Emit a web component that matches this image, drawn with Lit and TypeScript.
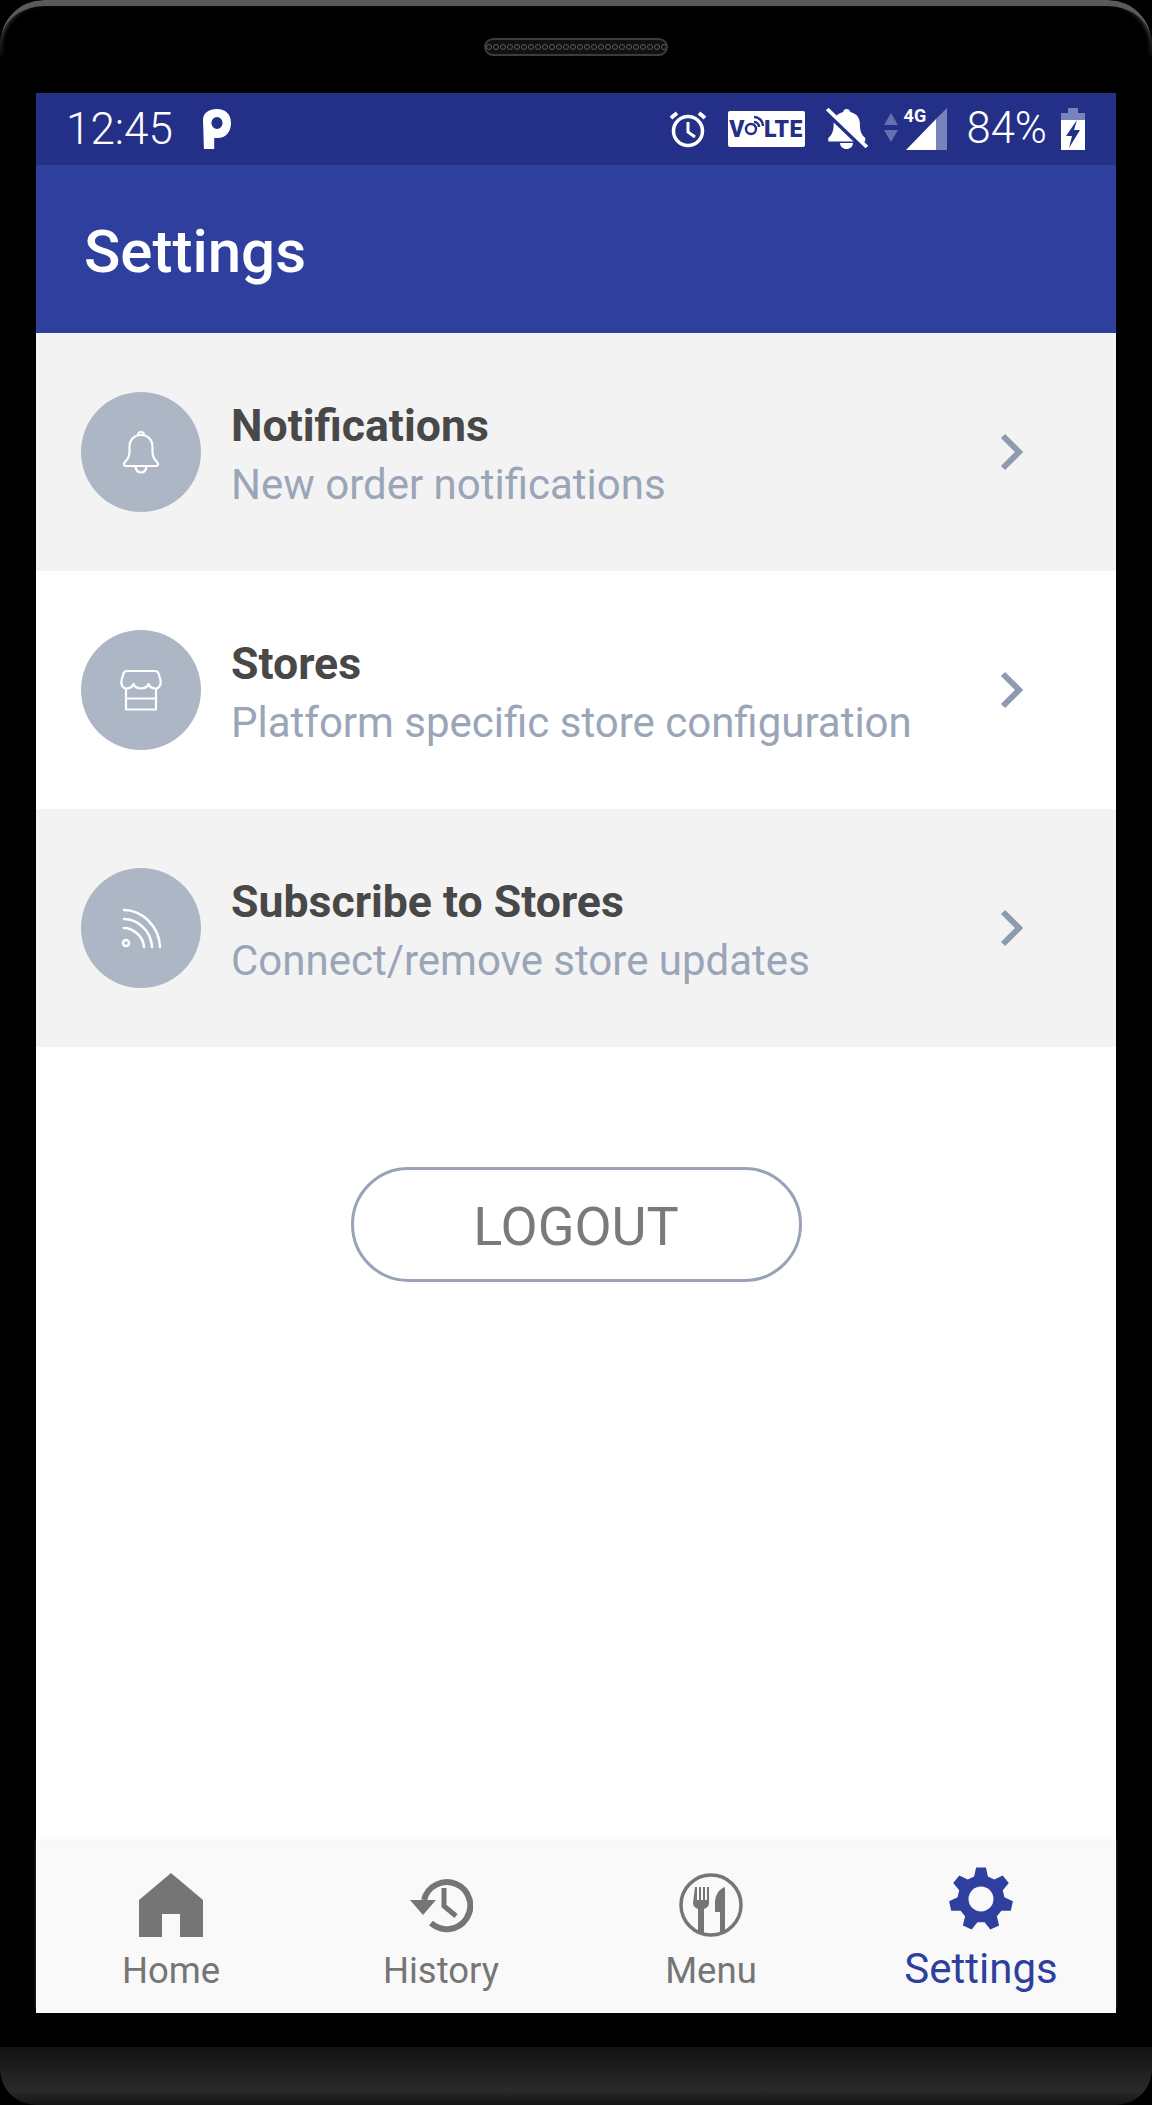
import { LitElement, html, css, svg } from "lit";
import { customElement } from "lit/decorators.js";

// seven toothed gear, same shape as the reference tab icon
const gearPoints = () => {
  const pts: string[] = [];
  const teeth = 7;
  for (let i = 0; i < teeth; i++) {
    const a = (i * 2 * Math.PI) / teeth - Math.PI / 2;
    const step = (2 * Math.PI) / teeth;
    const add = (r: number, off: number) =>
      pts.push(`${(32 + r * Math.cos(a + off * step)).toFixed(1)},${(32 + r * Math.sin(a + off * step)).toFixed(1)}`);
    add(32, -0.17);
    add(32, 0.17);
    add(23.5, 0.33);
    add(23.5, 0.67);
  }
  return pts.join(" ");
};

const icons = {
  bell: svg`<g fill="none" stroke="#fff" stroke-width="2.200"><path d="M21 7a3 3 0 1 1 6 0"/><path d="M24 7c-7 0-11.500 5-11.500 12v5c0 6-2.500 8-5 10.500-1.200 1.500-.5 3.500 1.500 3.500h30c2 0 2.700-2 1.500-3.500-2.500-2.500-5-4.500-5-10.500v-5c0-7-4.500-12-11.500-12Z"/><path d="M18.500 38.500c.5 4 2.500 6 5.500 6s5-2 5.500-6"/></g>`,
  store: svg`<g fill="none" stroke="#fff" stroke-width="2.200" stroke-linejoin="round"><path d="M10 5H38C40 5 41 6 41.500 7.500L43.500 14C44.500 19 42 22.500 38.500 22.500C35.500 22.500 32.500 20.500 31.500 18C30.500 20.500 27.500 22.500 24 22.500C20.500 22.500 17.500 20.500 16.500 18C15.500 20.500 12.500 22.500 9.500 22.500C6 22.500 3.500 19 4.500 14L6.500 7.500C7 6 8 5 10 5Z"/><path d="M9 23v20.500h30V23M9 32.500h30"/></g>`,
  feed: svg`<g fill="none" stroke="#fff" stroke-width="2.500" stroke-linecap="round"><path d="M7 6c17 0 35 15 36 37"/><path d="M7 15c13 0 27 11 28 28"/><path d="M7 24c8 0 19 7 20 19"/><circle cx="9" cy="39" r="3"/></g>`,
};

const rows = [
  { icon: icons.bell, title: "Notifications", sub: "New order notifications", shade: true },
  { icon: icons.store, title: "Stores", sub: "Platform specific store configuration", shade: false },
  { icon: icons.feed, title: "Subscribe to Stores", sub: "Connect/remove store updates", shade: true },
];

@customElement("app-root")
export class AppRoot extends LitElement {
  static styles = css`
    :host {
      display: block;
      width: 1152px;
      height: 2105px;
      background: #000;
      font-family: Roboto, "Liberation Sans", sans-serif;
      overflow: hidden;
    }

    .top-bezel {
      height: 93px;
      box-sizing: border-box;
      padding-top: 38px;
      display: flex;
      justify-content: center;
      align-items: flex-start;
      position: relative;
      overflow: hidden;
    }

    .top-bezel::before {
      content: "";
      position: absolute;
      left: 0;
      right: 0;
      top: 0;
      height: 120px;
      box-sizing: border-box;
      border-top: 6px solid #5a5a5a;
      border-radius: 44px 44px 0 0;
      box-shadow: inset 5px 0 4px -3px #4a4a4a, inset -5px 0 4px -3px #4a4a4a;
      -webkit-mask-image: linear-gradient(#000 30px, transparent 60px);
    }

    .speaker {
      width: 184px;
      height: 18px;
      box-sizing: border-box;
      border: 2px solid #3c3c3c;
      border-radius: 9px;
      background: #111;
      display: flex;
      align-items: center;
      justify-content: center;
      gap: 1px;
      overflow: hidden;
    }

    .speaker i {
      width: 6px;
      height: 6px;
      flex: none;
      border-radius: 50%;
      border: 1px solid #5c5c5c;
      box-sizing: border-box;
    }

    .screen {
      margin: 0 36px;
      height: 1920px;
      background: #fff;
      display: flex;
      flex-direction: column;
    }

    .status {
      height: 72px;
      flex: none;
      background: #243088;
      color: #fff;
      display: flex;
      align-items: center;
      padding: 0 31px 0 30px;
    }

    .status svg {
      display: block;
      flex: none;
    }

    .time {
      font-size: 44px;
      font-weight: 300;
      line-height: 1;
      margin-right: 29px;
      width: 108px;
    }

    .spacer {
      flex: 1;
    }

    .pct {
      font-size: 43.5px;
      font-weight: 300;
      line-height: 1;
      margin: 0 14px 0 19px;
    }

    .volte {
      width: 77px;
      height: 36px;
      background: #fff;
      color: #243088;
      border-radius: 2px;
      margin: 0 19px 0 21px;
      font-size: 23px;
      font-weight: 900;
      display: flex;
      align-items: center;
      justify-content: center;
      letter-spacing: 0.5px;
    }

    .volte svg {
      margin: -8px -2px 0 -1px;
    }

    .arrows {
      margin-left: 14px;
    }

    .signal {
      position: relative;
      width: 42px;
      height: 42px;
      margin-left: 7px;
    }

    .signal span {
      position: absolute;
      left: -2px;
      top: 0;
      font-size: 18px;
      font-weight: 700;
      line-height: 15px;
    }

    .appbar {
      height: 168px;
      flex: none;
      background: #2f3f9e;
      color: #fff;
      font-size: 60px;
      font-weight: 500;
      display: flex;
      align-items: center;
      padding: 4px 0 0 48px;
      box-sizing: border-box;
    }

    .row {
      height: 238px;
      flex: none;
      display: flex;
      align-items: center;
      padding: 0 90px 0 45px;
      background: #fff;
    }

    .row.shade {
      background: #f3f3f3;
    }

    .row:first-of-type {
      box-shadow: inset 0 8px 6px -6px #e2e2e2;
    }

    .circle {
      width: 120px;
      height: 120px;
      flex: none;
      border-radius: 50%;
      background: #adb6c4;
      display: flex;
      align-items: center;
      justify-content: center;
      margin-right: 30px;
    }

    .text {
      flex: 1;
      min-width: 0;
      padding-top: 8px;
    }

    .title {
      font-size: 44.6px;
      font-weight: 700;
      line-height: 58px;
      color: #484848;
    }

    .sub {
      font-size: 42px;
      line-height: 60px;
      color: #9aa5b8;
    }

    .actions {
      flex: 1;
      display: flex;
      justify-content: center;
      align-items: flex-start;
      padding-top: 120px;
    }

    .logout {
      width: 451px;
      height: 115px;
      box-sizing: border-box;
      border: 3px solid #9aa2b8;
      border-radius: 58px;
      background: #fff;
      color: #7a7a7a;
      font-family: inherit;
      font-size: 54px;
      padding: 4px 0 0;
    }

    .tabs {
      height: 172px;
      flex: none;
      background: #f9f9f9;
      box-shadow: 0 -3px 4px -2px #f4f4f4;
      display: grid;
      grid-template-columns: repeat(4, 1fr);
    }

    .tab {
      display: flex;
      flex-direction: column;
      align-items: center;
      color: #757575;
      font-size: 36.5px;
      line-height: 42px;
      padding-top: 32px;
    }

    .tab svg {
      display: block;
      margin-bottom: 13px;
    }

    .tab.active {
      color: #2f3f9e;
      font-size: 42px;
      padding-top: 26px;
    }

    .tab.active svg {
      margin-bottom: 17px;
    }

    .chin {
      height: 92px;
      display: flex;
      flex-direction: column;
      justify-content: flex-end;
    }

    .chin div {
      height: 58px;
      background: linear-gradient(#121212, #2a2a2a 75%, #141414);
      border-radius: 0 0 36px 36px;
    }
  `;

  renderStatus() {
    return html`
      <div class="status">
        <span class="time">12:45</span>
        <svg width="28" height="40" viewBox="0 0 30 40" preserveAspectRatio="none">
          <path d="M0 11C0 4 6 0 15 0s15 5 15 14-6 15-14 15h-4v11H1Zm15-3a6 6 0 1 0 0 12 6 6 0 0 0 0-12Z" fill="#fff" fill-rule="evenodd"/>
        </svg>
        <span class="spacer"></span>
        <svg width="38" height="38" viewBox="0 0 38 38" fill="none" stroke="#fff">
          <circle cx="19" cy="21" r="14.500" stroke-width="3.500"/>
          <path d="M19 12v10l7 5" stroke-width="3"/>
          <path d="M2 8l6-5M36 8l-6-5" stroke-width="4"/>
        </svg>
        <span class="volte">
          V<svg width="22" height="24" viewBox="0 0 22 24" fill="none" stroke="#243088" stroke-width="2.500"><circle cx="7" cy="16" r="5"/><path d="M10 4c5 0 9 4 9 9M10 9c2.500 0 5 2 5 5"/></svg>LTE
        </span>
        <svg width="45" height="42" viewBox="0 0 42 42" preserveAspectRatio="none">
          <path d="M21 1c2 0 3.500 1.500 3.500 3 6 1.500 9 6 9 12 0 7 1.500 11 5 14v3.500H4V30c3.500-3 5-7 5-14 0-6 3-10.500 9-12 0-1.500 1-3 3-3Z" fill="#fff"/>
          <path d="M15 35h12c0 3.500-2.500 6-6 6s-6-2.500-6-6Z" fill="#fff"/>
          <path d="M2 3l36 37" stroke="#243088" stroke-width="6"/>
          <path d="M3 1l37 38" stroke="#fff" stroke-width="3.500"/>
        </svg>
        <svg class="arrows" width="16" height="32" viewBox="0 0 16 32" fill="#6670b0">
          <path d="M8 0l7 12H1ZM1 17h14L8 29Z"/>
        </svg>
        <div class="signal">
          <svg width="42" height="42" viewBox="0 0 42 42">
            <path d="M41 0v42H30V11Z" fill="#7983bb"/>
            <path d="M30 11v31H0Z" fill="#fff"/>
          </svg>
          <span>4G</span>
        </div>
        <span class="pct">84%</span>
        <svg width="24" height="42" viewBox="0 0 24 42">
          <path d="M7 0h10v5h7v7H0V5h7Z" fill="#7983bb"/>
          <path d="M0 12h24v30H0Z" fill="#fff"/>
          <path d="M16 12L5 28h6l-3 12 11-18h-6l3-10Z" fill="#243088"/>
        </svg>
      </div>
    `;
  }

  renderRow(r: (typeof rows)[number]) {
    return html`
      <div class="row ${r.shade ? "shade" : ""}">
        <div class="circle">
          <svg width="48" height="48" viewBox="0 0 48 48">${r.icon}</svg>
        </div>
        <div class="text">
          <div class="title">${r.title}</div>
          <div class="sub">${r.sub}</div>
        </div>
        <svg width="26" height="38" viewBox="0 0 26 38" fill="none" stroke="#8e9ab0" stroke-width="6">
          <path d="M3 3l16 16L3 35"/>
        </svg>
      </div>
    `;
  }

  renderTabs() {
    return html`
      <nav class="tabs">
        <div class="tab">
          <svg width="64" height="64" viewBox="0 0 64 64">
            <path d="M32 0l32 27v37H41V41H23v23H0V27Z" fill="#757575"/>
          </svg>
          Home
        </div>
        <div class="tab">
          <svg width="64" height="64" viewBox="0 0 64 64" fill="none" stroke="#757575" stroke-width="6">
            <path d="M15 27a23.500 23.500 0 1 1 7 23"/>
            <path d="M1 27h26L14 42Z" fill="#757575" stroke="none"/>
            <path d="M35 15v18l12 10" stroke-width="5"/>
          </svg>
          History
        </div>
        <div class="tab">
          <svg width="64" height="64" viewBox="0 0 64 64">
            <circle cx="32" cy="32" r="30" fill="none" stroke="#757575" stroke-width="3.500"/>
            <path d="M16 14h2v13h2V14h2v13h2V14h2v13h2V14h2v16c0 3-2 5-5 6v24h-6V36c-3-1-5-3-5-6Z" fill="#757575"/>
            <path d="M46 14v25h-10V30c0-8 4-14 10-16Z M41 39h5v20h-5Z" fill="#757575"/>
          </svg>
          Menu
        </div>
        <div class="tab active">
          <svg width="64" height="64" viewBox="0 0 64 64">
            <polygon points=${gearPoints()} fill="#2f3f9e"/>
            <circle cx="32" cy="32" r="12.500" fill="#f9f9f9"/>
          </svg>
          Settings
        </div>
      </nav>
    `;
  }

  render() {
    return html`
      <div class="top-bezel">
        <div class="speaker">${Array.from({ length: 26 }, () => html`<i></i>`)}</div>
      </div>
      <div class="screen">
        ${this.renderStatus()}
        <header class="appbar">Settings</header>
        ${rows.map((r) => this.renderRow(r))}
        <div class="actions"><button class="logout">LOGOUT</button></div>
        ${this.renderTabs()}
      </div>
      <div class="chin"><div></div></div>
    `;
  }
}
